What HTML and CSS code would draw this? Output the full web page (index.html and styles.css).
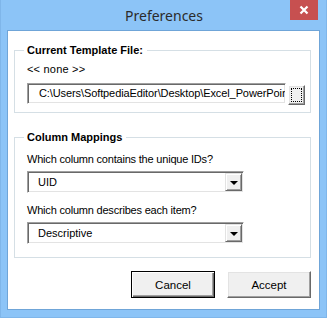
FILE: index.html
```html
<!DOCTYPE html>
<html>
<head>
<meta charset="utf-8">
<link rel="stylesheet" href="styles.css">
</head>
<body>
<div class="window">
  <div class="titlebar">
    <span class="title">Preferences</span>
    <div class="close">
      <svg width="10" height="10" viewBox="0 0 10 10"><path d="M1.5 1.5 L8.5 8.5 M8.5 1.5 L1.5 8.5" stroke="#fff" stroke-width="2.2"/></svg>
    </div>
  </div>
  <div class="client">
    <fieldset class="group g1">
      <legend>Current Template File:</legend>
      <div class="line none">&lt;&lt; none &gt;&gt;</div>
      <div class="filerow">
        <div class="textbox">C:\Users\SoftpediaEditor\Desktop\Excel_PowerPoint</div>
        <div class="browse"><span class="focus"></span></div>
      </div>
    </fieldset>
    <fieldset class="group g2">
      <legend>Column Mappings</legend>
      <div class="line q1">Which column contains the unique IDs?</div>
      <div class="combo c1"><span class="value">UID</span><span class="drop"><span class="arrow"></span></span></div>
      <div class="line q2">Which column describes each item?</div>
      <div class="combo c2"><span class="value">Descriptive</span><span class="drop"><span class="arrow"></span></span></div>
    </fieldset>
    <div class="buttons">
      <div class="btn default">Cancel</div>
      <div class="btn">Accept</div>
    </div>
  </div>
</div>
</body>
</html>
```
FILE: styles.css
```css
html, body {
  margin: 0;
  padding: 0;
}
body {
  font-family: "Liberation Sans", Arial, sans-serif;
  font-size: 11px;
  color: #000;
}
.window {
  position: relative;
  width: 327px;
  height: 318px;
  box-sizing: border-box;
  background: #8cc4f7;
  border: 1px solid #7fb6ea;
  border-top: none;
  display: flex;
  flex-direction: column;
  padding: 0 6px 7px 6px;
}
.titlebar {
  height: 30px;
  display: flex;
  align-items: center;
  justify-content: center;
}
.title {
  font-family: "Noto Sans", "Open Sans", sans-serif;
  font-size: 14px;
  color: #2b2b2b;
  margin-top: 1px;
  margin-left: 1px;
}
.close {
  position: absolute;
  top: 0;
  left: 289px;
  width: 28px;
  height: 20px;
  background: #c75050;
  display: flex;
  align-items: center;
  justify-content: center;
}
.close svg { display: block; }
.client {
  flex: 1;
  background: #fff;
  border: 1px solid #6fa5d8;
  display: flex;
  flex-direction: column;
}
.group {
  margin: 0 8px 0 6px;
  border: 1px solid #d5dfe5;
  padding: 0 5px 0 12px;
  min-width: 0;
}
.group legend {
  font-weight: bold;
  font-size: 11px;
  line-height: 14px;
  padding: 0 4px 0 3px;
  margin-left: -3px;
}
.g1 {
  margin-top: 12px;
  padding-bottom: 7px;
}
.g2 {
  margin-top: 17px;
  padding-bottom: 13px;
}
.line {
  line-height: 14px;
  height: 14px;
  white-space: nowrap;
}
.none {
  margin-top: 5px;
  letter-spacing: 0.2px;
}
.q1, .q2 { letter-spacing: -0.2px; }
.filerow {
  margin-top: 7px;
  display: flex;
  align-items: flex-start;
  gap: 2px;
}
.textbox {
  width: 259px;
  height: 21px;
  box-sizing: border-box;
  border-top: 1px solid #a0a0a0;
  border-left: 1px solid #a0a0a0;
  border-right: 1px solid #fff;
  border-bottom: 1px solid #fff;
  box-shadow: inset 1px 1px 0 #696969, inset -1px -1px 0 #e3e3e3;
  padding: 0 0 0 11px;
  line-height: 19px;
  letter-spacing: -0.1px;
  white-space: nowrap;
  overflow: hidden;
  background: #fff;
}
.browse {
  margin-top: 2px;
  width: 17px;
  height: 20px;
  box-sizing: border-box;
  background: #f0f0f0;
  border-top: 1px solid #fff;
  border-left: 1px solid #fff;
  border-right: 1px solid #696969;
  border-bottom: 1px solid #696969;
  box-shadow: inset -1px -1px 0 #a0a0a0, inset 1px 1px 0 #e3e3e3;
  padding: 2px 2px 2px 2px;
  display: flex;
}
.browse .focus {
  flex: 1;
  border: 1px dotted #000;
}
.q1 { margin-top: 8px; }
.q2 { margin-top: 10px; }
.combo {
  margin-top: 5px;
  width: 217px;
  height: 22px;
  box-sizing: border-box;
  border-top: 1px solid #a0a0a0;
  border-left: 1px solid #a0a0a0;
  border-right: 1px solid #fff;
  border-bottom: 1px solid #fff;
  box-shadow: inset 1px 1px 0 #696969, inset -1px -1px 0 #e3e3e3;
  padding: 1px 1px 1px 2px;
  display: flex;
  align-items: stretch;
  background: #fff;
}
.combo .value {
  flex: 1;
  padding-left: 8px;
  line-height: 18px;
}
.combo .drop {
  width: 17px;
  box-sizing: border-box;
  background: #f0f0f0;
  border-top: 1px solid #e3e3e3;
  border-left: 1px solid #e3e3e3;
  border-right: 1px solid #696969;
  border-bottom: 1px solid #696969;
  box-shadow: inset 1px 1px 0 #fff, inset -1px -1px 0 #a0a0a0;
  display: flex;
  align-items: center;
  justify-content: center;
}
.arrow {
  width: 0;
  height: 0;
  border-left: 4px solid transparent;
  border-right: 4px solid transparent;
  border-top: 4px solid #000;
  margin-top: 1px;
}
.buttons {
  margin: 13px 8px 0 0;
  display: flex;
  justify-content: flex-end;
  gap: 12px;
}
.btn {
  width: 84px;
  height: 27px;
  box-sizing: border-box;
  background: #f0f0f0;
  border-top: 1px solid #fff;
  border-left: 1px solid #fff;
  border-right: 1px solid #696969;
  border-bottom: 1px solid #696969;
  box-shadow: inset -1px -1px 0 #a0a0a0, inset 1px 1px 0 #e3e3e3;
  display: flex;
  align-items: center;
  justify-content: center;
  font-size: 11.5px;
}
.btn.default {
  border: 1px solid #000;
  box-shadow: inset 1px 1px 0 #fff, inset -1px -1px 0 #696969, inset -2px -2px 0 #a0a0a0;
}
```
